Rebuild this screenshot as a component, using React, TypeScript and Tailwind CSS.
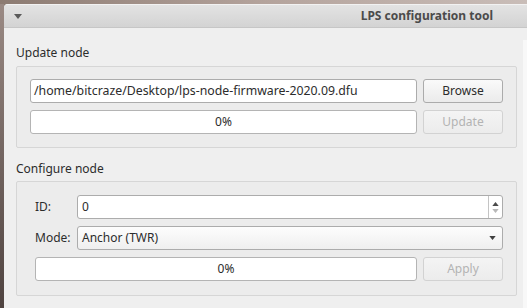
function Caret({ className = '' }: { className?: string }) {
  return (
    <svg width="8" height="5" viewBox="0 0 8 5" className={className}>
      <path d="M0 0 L8 0 L4 5 Z" fill="currentColor" />
    </svg>
  );
}

function TextBox({ value }: { value: string }) {
  return (
    <div className="flex-1 h-[24px] bg-white border border-[#acacac] rounded-[3px] flex items-center px-[3px] text-[12.3px] text-[#2c2c2c]">
      {value}
    </div>
  );
}

function Progress() {
  return (
    <div className="flex-1 h-[24px] bg-white border border-[#b4b4b4] rounded-[3px] flex items-center justify-center text-[#2c2c2c]">
      0%
    </div>
  );
}

function Button({ label, disabled }: { label: string; disabled?: boolean }) {
  return (
    <div
      className={
        disabled
          ? 'w-[80px] h-[24px] rounded-[3px] border border-[#d2d2d2] bg-gradient-to-b from-[#f4f4f4] to-[#ececec] flex items-center justify-center text-[#b3b3b3]'
          : 'w-[80px] h-[24px] rounded-[3px] border border-[#ababab] bg-gradient-to-b from-[#fafafa] to-[#ebebeb] flex items-center justify-center text-[#2c2c2c]'
      }
    >
      {label}
    </div>
  );
}

export default function App() {
  return (
    <div
      className="w-[527px] h-[308px] overflow-hidden flex flex-col bg-gradient-to-r from-[#8c7b72] via-[#b4a39c] to-[#c9bdb8] text-[12px]"
      style={{ fontFamily: '"Noto Sans", "Open Sans", sans-serif' }}
    >
      <div className="h-[4px] shrink-0" />
      <div className="flex flex-1">
        <div className="w-[4px] shrink-0 bg-gradient-to-b from-[#9a8a84] to-[#4f4340]" />

        {/* WINDOW */}
        <div className="flex-1 flex flex-col rounded-tl-[4px] overflow-hidden bg-[#efefef]">
          <header className="h-[24px] shrink-0 flex items-center bg-gradient-to-b from-[#e3e3e3] to-[#d3d3d3] border-b border-[#c6c6c6] border-t border-t-[#f2f2f2]">
            <Caret className="ml-[10px] text-[#5a5a5a]" />
            <span className="ml-auto mr-[34px] font-bold text-[#4b4b4b]">LPS configuration tool</span>
          </header>

          <div className="flex flex-1">
            <main className="flex-1 pl-[12px] pr-[6px] pt-[16px] text-[#2c2c2c]">
              {/* UPDATE NODE */}
              <p className="h-[18px] leading-[18px]">Update node</p>
              <section className="mt-[4px] border border-[#d6d6d6] rounded-[2px] bg-[#ececec] pt-[12px] pb-[13px] pl-[13px] pr-[13px] space-y-[7px]">
                <div className="flex gap-[6px]">
                  <TextBox value="/home/bitcraze/Desktop/lps-node-firmware-2020.09.dfu" />
                  <Button label="Browse" />
                </div>
                <div className="flex gap-[6px]">
                  <Progress />
                  <Button label="Update" disabled />
                </div>
              </section>

              {/* CONFIGURE NODE */}
              <p className="mt-[12px] h-[18px] leading-[18px]">Configure node</p>
              <section className="mt-[3px] border border-[#d6d6d6] rounded-[2px] bg-[#ececec] pt-[13px] pb-[14px] pl-[18px] pr-[13px] space-y-[7px]">
                <div className="flex items-center">
                  <span className="w-[42px] shrink-0">ID:</span>
                  <div className="flex-1 h-[24px] bg-white border border-[#acacac] rounded-[3px] flex items-stretch">
                    <span className="flex-1 flex items-center px-[4px]">0</span>
                    <div className="w-[14px] border-l border-[#c4c4c4] flex flex-col items-center justify-center gap-[3px]">
                      <Caret className="rotate-180 text-[#4a4a4a] w-[7px] h-[4px]" />
                      <Caret className="text-[#b8b8b8] w-[7px] h-[4px]" />
                    </div>
                  </div>
                </div>
                <div className="flex items-center">
                  <span className="w-[42px] shrink-0">Mode:</span>
                  <div className="flex-1 h-[24px] border border-[#acacac] rounded-[3px] bg-gradient-to-b from-[#fdfdfd] to-[#efefef] flex items-center pl-[4px] pr-[6px]">
                    <span className="flex-1">Anchor (TWR)</span>
                    <Caret className="text-[#3f3f3f] w-[7px] h-[4px]" />
                  </div>
                </div>
                <div className="flex gap-[6px]">
                  <Progress />
                  <Button label="Apply" disabled />
                </div>
              </section>
            </main>
            <div className="w-[4px] shrink-0 mt-[12px] bg-[#f8f8f8]" />
          </div>
        </div>
      </div>
    </div>
  );
}
